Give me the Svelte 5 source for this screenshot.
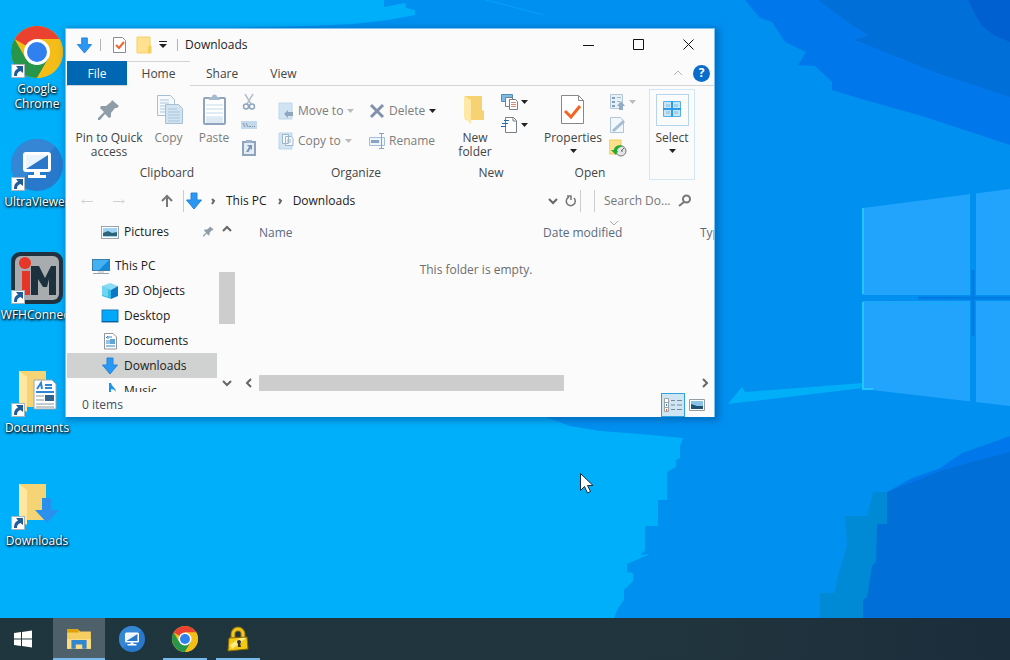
<script lang="ts">
  type IconName = string;

  const shortcuts: { label: string; icon: IconName }[] = [
    { label: "Google Chrome", icon: "chrome" },
    { label: "UltraViewer", icon: "ultraviewer" },
    { label: "WFHConnect", icon: "wfh" },
    { label: "Documents", icon: "folder-doc" },
    { label: "Downloads", icon: "folder-down" },
  ];

  const tabs = ["File", "Home", "Share", "View"];

  const places: { label: string; icon: IconName }[] = [
    { label: "3D Objects", icon: "cube" },
    { label: "Desktop", icon: "desktop" },
    { label: "Documents", icon: "document" },
    { label: "Downloads", icon: "down" },
    { label: "Music", icon: "music" },
  ];

  const tasks: { label: string; icon: IconName; open: boolean }[] = [
    { label: "File Explorer", icon: "explorer", open: true },
    { label: "UltraViewer", icon: "ultraviewer", open: false },
    { label: "Google Chrome", icon: "chrome", open: true },
    { label: "Lock", icon: "lock", open: true },
  ];

  let activeTab = $state("Home");
  let activePlace = $state("Downloads");
  let activeTask = $state("File Explorer");
  let search = $state("");
</script>

{#snippet glyph(name: IconName)}
  {#if name === "chrome"}
    <svg viewBox="0 0 52 52" aria-hidden="true">
      <circle cx="26" cy="26" r="26" fill="#f4bd17" />
      <path d="M26 26 3.5 13A26 26 0 0 1 48.500 13H26Z" fill="#ea4130" />
      <path d="M3.500 13A26 26 0 0 0 26 52L37.500 32.500 26 26 14.700 32.500Z" fill="#27964a" />
      <path d="M48.500 13H26V26L37.300 32.500 26 52A26 26 0 0 0 48.500 13Z" fill="#f4bd17" />
      <circle cx="26" cy="26" r="13" fill="#fff" />
      <circle cx="26" cy="26" r="10" fill="#3080f0" />
    </svg>
  {:else if name === "ultraviewer"}
    <svg viewBox="0 0 52 52" aria-hidden="true">
      <circle cx="26" cy="26" r="26" fill="#2878cc" />
      <path d="M7.600 44.400A26 26 0 0 1 44.400 7.600Z" fill="#3a8bd8" opacity=".7" />
      <rect x="12" y="13" width="28" height="20" rx="3" fill="#fff" />
      <path d="M15 16H37L15 30Z" fill="#eaf4fd" />
      <path d="M37 16V30H15Z" fill="#2b78c8" />
      <path d="M23 33h6v3h6v3H17v-3h6Z" fill="#fff" />
    </svg>
  {:else if name === "wfh"}
    <svg viewBox="0 0 52 52" aria-hidden="true">
      <rect width="52" height="52" rx="9" fill="#20323f" />
      <rect x="4" y="4" width="44" height="44" rx="6" fill="#a9acaf" />
      <path d="M20 43V14h8l6 12 6-12h5v29h-7V27l-2 8h-4l-5-8v16Z" fill="#1d303d" />
      <path d="M11 19h8v24h-8Z" fill="#e83529" />
      <circle cx="14" cy="11" r="6" fill="#e83529" />
    </svg>
  {:else if name === "folder-doc" || name === "folder-down"}
    <svg viewBox="0 0 52 52" aria-hidden="true">
      <path d="M8 6h27v36H17L8 39Z" fill="#f5d476" />
      <path d="M8 6l8 6v35l-8-5Z" fill="#ffe7a0" />
      {#if name === "folder-doc"}
        <path d="M23 15h18l4 4v25H23Z" fill="#fff" stroke="#9aa4ac" />
        <path d="M26 24l4-6 1 6M34 20h7M34 23h7M25 27h18" fill="none" stroke="#2f86d6" stroke-width="2" />
        <path d="M25 31h8M25 35h8M25 39h18M25 42h18" stroke="#8a949c" />
        <path d="M34 30h9v6h-9Z" fill="#31638c" />
      {:else}
        <path d="M31 20h9v12h8L36 45 24 32h7Z" fill="#2a90ee" />
      {/if}
    </svg>
  {:else if name === "down"}
    <svg viewBox="-1 0 18 18" aria-hidden="true">
      <path d="M5 1h6v7h4.500L8 17 .5 8H5Z" fill="#2a97f5" stroke="#2684d8" />
    </svg>
  {:else if name === "cube"}
    <svg viewBox="0 0 18 18" aria-hidden="true">
      <path d="M9 1l8 3-7 4-9-4Z" fill="#8adcf5" />
      <path d="M1 4l9 4v9l-9-3Z" fill="#36bce6" />
      <path d="M17 4l-7 4v9l7-3Z" fill="#0a78c2" />
      <path d="M1 4l6 2v9l-6-2Z" fill="#70d4f0" />
    </svg>
  {:else if name === "desktop"}
    <svg viewBox="0 0 18 18" aria-hidden="true">
      <rect x="1" y="3" width="16" height="12" fill="#00a8fa" stroke="#1676b8" />
      <path d="M1 14.500h16" stroke="#145f98" />
    </svg>
  {:else if name === "document"}
    <svg viewBox="0 0 18 18" aria-hidden="true">
      <path d="M3.500 1.500H12l3.500 3.500v12h-12Z" fill="#fff" stroke="#8f979d" />
      <path d="M5 6l2-2v3M8 5h3M5 9h9M5 11h4M5 14h9" fill="none" stroke="#2e86c9" />
      <path d="M9 7h5v5H9Z" fill="#5ea6d8" />
    </svg>
  {:else if name === "music"}
    <svg viewBox="0 0 18 18" aria-hidden="true">
      <path d="M8 1h2c1 4 5 5 5 9-1-2-3-3-5-3v8c-3 3-7 1-5-1 1-1 2-1 3-1Z" fill="#1996ec" />
    </svg>
  {:else if name === "pictures"}
    <svg viewBox="0 0 18 18" aria-hidden="true">
      <rect x=".5" y="3.500" width="17" height="12" fill="#fff" stroke="#9aa2a8" />
      <path d="M2 5h14v9H2Z" fill="#9fd3f3" />
      <path d="M2 10l5-2 4 2 5-1v4H2Z" fill="#2c6379" />
    </svg>
  {:else if name === "pc"}
    <svg viewBox="0 0 18 18" aria-hidden="true">
      <rect x=".5" y="2.500" width="17" height="11" fill="#43b1f2" stroke="#3e7ca8" />
      <path d="M17 3v10H7Z" fill="#1689d8" />
      <path d="M1 16.500h16" stroke="#98a2aa" />
      <path d="M6 14h6v2H6Z" fill="#d4dbe0" />
    </svg>
  {:else if name === "pin"}
    <svg viewBox="0 0 22 22" aria-hidden="true">
      <path d="M14 1l7 6-2 2h-2l-4 5v4l-2 1-4-4-5 6H0v-2l6-6-4-4 1-2h5l5-4V3Z" fill="#8e9da8" />
    </svg>
  {:else if name === "explorer"}
    <svg viewBox="0 0 24 24" aria-hidden="true">
      <path d="M1 3h10l2 2h10v16H1Z" fill="#f7ce62" />
      <path d="M1 3h10l1 3H1Z" fill="#dfa005" />
      <path d="M1 12h22v9H1Z" fill="#ffdc82" />
      <path d="M5 13h14v8h-4v-4H9v4H5Z" fill="#3186d0" />
    </svg>
  {:else if name === "lock"}
    <svg viewBox="-1 0 26 27" aria-hidden="true">
      <path d="M7 13V8a5 5 0 0 1 10 0v5" fill="none" stroke="#8a6d10" stroke-width="5" />
      <path d="M7 13V8a5 5 0 0 1 10 0v5" fill="none" stroke="#f2c71d" stroke-width="3" />
      <path d="M3 12l18-1 1 12-20 2Z" fill="#f5c913" stroke="#8b6b06" />
      <path d="M4 19l10-7h6L6 23Z" fill="#ffeb83" />
      <circle cx="13" cy="16" r="2" fill="#333" />
      <path d="M12 17h2l1 4h-3Z" fill="#333" />
    </svg>
  {/if}
{/snippet}

{#snippet chevron(d: string)}
  <svg class="chevron" viewBox="0 0 10 10" aria-hidden="true"><path {d} /></svg>
{/snippet}

{#snippet caret()}
  <svg class="caret" viewBox="0 0 7 4" aria-hidden="true"><path d="M0 0h7L3.500 4Z" /></svg>
{/snippet}

<div class="screen">
  <main class="desktop">
    <svg class="wallpaper" viewBox="0 0 1010 618" preserveAspectRatio="xMinYMin slice" aria-hidden="true">
      <rect width="1010" height="618" fill="#0090f0" />
      <path d="M0 0H384V7L405 3 406 8 415 10V15L388 20 353 24 310 26 225 28 147 31 66 35V415H540L570 426 600 431 640 434 683 438 680 446V458L676 460V467L667 472V500H658V526H645V551L640 555 650 554 627 564V572L633 573V581L624 590V600L618 608 614 618H0Z" fill="#00affa" />
      <path d="M486 0l58 15" stroke="#00a4f6" fill="none" />
      <path d="M745 0L760 18 772 22 785 42 806 52 798 65 815 66 832 82V90L865 100 925 117 1010 145V0Z" fill="#0078ec" />
      <path d="M818 0L850 24 868 35 855 40 900 58 940 74 1010 97V0Z" fill="#0070d8" />
      <path d="M968 0L976 16 982 26 995 36 1010 42V0Z" fill="#0060d0" />
      <path d="M887 492H873L867 516H845L847 546 839 572 834 593H820V618H870L887 524Z" fill="#008ad6" />
      <path d="M1010 436L988 444 962 453 940 468 910 479 887 492 930 485 1010 460Z" fill="#0078ec" />
      <path d="M1010 452L975 461 940 471 887 492V524H877L876 562 872 566 867 597 863 600V618H1010Z" fill="#0070d8" />
      <path d="M728 404l14-17 3 5 118-9v5l-75 9Z" fill="#00aff8" />
      <path d="M863 208L1010 189V406L863 389Z" fill="#22a4fd" />
      <path d="M863 208v86M863 302v87h10" stroke="#20c8fa" stroke-width="2" fill="none" />
      <path d="M973 190v216" stroke="#0090f0" stroke-width="6" />
      <path d="M863 298h147" stroke="#0090f0" stroke-width="6" />
      <path d="M918 298h92M973 270v66" stroke="#007be4" stroke-width="3" />
      <path d="M969 194v100M969 303v98M864 303l104 1" stroke="#15acf4" />
    </svg>

    <ul class="shortcuts">
      {#each shortcuts as item}
        <li>
          <a href="#{item.icon}">
            <span class="shortcut-icon">
              {@render glyph(item.icon)}
              <svg class="overlay-arrow" viewBox="0 0 14 14" aria-hidden="true">
                <rect x=".5" y=".5" width="13" height="13" fill="#fff" stroke="#a9b4bc" />
                <path d="M5 2h7v7L9.500 7C7 8 6 9 6 12H3C3 8 4 6 7 4.500Z" fill="#1f5c98" />
              </svg>
            </span>
            <span class="shortcut-label">{item.label}</span>
          </a>
        </li>
      {/each}
    </ul>

    <section class="window" aria-label="Downloads">
      <header class="titlebar">
        <span class="title-icon">{@render glyph("down")}</span>
        <span class="bar"></span>
        <button class="quick" aria-label="Properties">
          <svg width="16" height="18" viewBox="0 0 16 18" aria-hidden="true">
            <path d="M1.500 1.500h9l3 3v12h-12Z" fill="#fff" stroke="#878d92" />
            <path d="M4 9l3 3 5-6" fill="none" stroke="#ee6330" stroke-width="2" />
          </svg>
        </button>
        <button class="quick" aria-label="New folder">
          <svg width="16" height="18" viewBox="0 0 16 18" aria-hidden="true">
            <path d="M1 1h13v8l1 1v7H1Z" fill="#ffe190" stroke="#f6d163" />
            <path d="M12 10h3v7h-3Z" fill="#f6ce5c" />
          </svg>
        </button>
        <button class="quick customize" aria-label="Customize Quick Access Toolbar">
          <svg width="8" height="8" viewBox="0 0 8 8" aria-hidden="true"><path d="M0 0h8v1H0ZM0 3h8L4 7Z" fill="#222" /></svg>
        </button>
        <span class="bar"></span>
        <h1>Downloads</h1>
        <div class="window-buttons">
          <button aria-label="Minimize">
            <svg width="12" height="12" viewBox="0 0 12 12" aria-hidden="true"><path d="M0 6.500h11" /></svg>
          </button>
          <button aria-label="Maximize">
            <svg width="12" height="12" viewBox="0 0 12 12" aria-hidden="true"><path d="M.5.5h10v10H.5Z" /></svg>
          </button>
          <button aria-label="Close">
            <svg width="12" height="12" viewBox="0 0 12 12" aria-hidden="true"><path d="M.5.5l10 10M10.500.5l-10 10" /></svg>
          </button>
        </div>
      </header>

      <nav class="tabs" aria-label="Ribbon tabs">
        {#each tabs as tab}
          <button
            class="tab"
            class:file={tab === "File"}
            class:active={tab === activeTab}
            onclick={() => (activeTab = tab)}
          >
            {tab}
          </button>
        {/each}
        <div class="tabs-end">
          <button class="collapse" aria-label="Minimize the Ribbon">{@render chevron("M1 7l4-4 4 4")}</button>
          <button class="help" aria-label="Help">?</button>
        </div>
      </nav>

      <div class="ribbon">
        <div class="group clipboard-group">
          <div class="group-body">
            <button class="large pin-button">
              <span class="large-icon pin-icon">{@render glyph("pin")}</span>
              Pin to Quick access
            </button>
            <button class="large copy-button" disabled>
              <svg class="large-icon" viewBox="0 0 32 32" aria-hidden="true">
                <g fill="#f6fafd" stroke="#a9bfd6">
                  <path d="M4.500 1.500h13l4 4v16h-17Z" />
                  <path d="M12.500 10.500h13l4 4v15h-17Z" fill="#d2e3f1" />
                </g>
                <path d="M7 6h9M7 9h9M7 12h5M7 15h5M7 18h5M15 15h9M15 18h12M15 21h12M15 24h12M15 27h12" stroke="#a9c5dd" />
              </svg>
              Copy
            </button>
            <button class="large paste-button" disabled>
              <svg class="large-icon" viewBox="0 0 32 32" aria-hidden="true">
                <rect x="6" y="4" width="21" height="26" rx="1" fill="#fff" stroke="#8fa3bd" stroke-width="2" />
                <path d="M11 6V3h3a2.500 2.500 0 0 1 5 0h3v3Z" fill="#a7b9cd" />
                <path d="M8 11h17M8 15h17M8 19h17M8 23h17" stroke="#c2d9ea" />
                <path d="M8 24h17v5H8Z" fill="#dce9f4" />
              </svg>
              Paste
            </button>
            <div class="small-icons">
              <button aria-label="Cut" disabled>
                <svg viewBox="0 0 18 18" aria-hidden="true">
                  <path d="M5 1l6 10M13 1L7 11" stroke="#b4bfca" stroke-width="1.500" fill="none" />
                  <g fill="none" stroke="#8fa5c0" stroke-width="1.500"><circle cx="6" cy="13.500" r="2.500" /><circle cx="12" cy="13.500" r="2.500" /></g>
                </svg>
              </button>
              <button aria-label="Copy path" disabled>
                <svg viewBox="0 0 18 18" aria-hidden="true">
                  <path d="M1 5h16v8H1Z" fill="#c5d9ec" />
                  <path d="M3 7l2 4M6 7l2 4M9 10.500h2M12 10.500h1M14 10.500h1" stroke="#7f95ad" />
                </svg>
              </button>
              <button aria-label="Paste shortcut" disabled>
                <svg viewBox="0 0 18 18" aria-hidden="true">
                  <rect x="3" y="3" width="12" height="13" fill="#e2edf6" stroke="#8fa3bd" stroke-width="2" />
                  <path d="M6 1h6v3H6Z" fill="#a0b2c8" />
                  <path d="M7 6h5v5l-1.500-1.500-2 3.500H6l3-5Z" fill="#7e96b1" />
                </svg>
              </button>
            </div>
          </div>
          <div class="group-label">Clipboard</div>
        </div>

        <div class="group organize-group">
          <div class="group-body rows">
            <button class="row-button" disabled>
              <svg viewBox="0 0 16 18" aria-hidden="true">
                <path d="M1 1h13v16H1Z" fill="#d0e4f3" stroke="#bed6ea" />
                <path d="M6 12l4-4v2h5v4h-5v2Z" fill="#91a7bf" />
              </svg>
              Move to {@render caret()}
            </button>
            <button class="row-button delete-button" disabled>
              <svg viewBox="0 0 16 18" aria-hidden="true"><path d="M2 3l12 12M14 3L2 15" stroke="#8290ae" stroke-width="3" /></svg>
              Delete {@render caret()}
            </button>
            <button class="row-button" disabled>
              <svg viewBox="0 0 16 18" aria-hidden="true">
                <path d="M1 1h13v16H1Z" fill="#d0e4f3" stroke="#bed6ea" />
                <path d="M4.500 2.500h6v9h-6ZM7.500 4.500H13l2 2v7H7.500Z" fill="#f4f9fc" stroke="#9db5cd" />
                <path d="M9 8h4M9 10h4" stroke="#9db5cd" />
              </svg>
              Copy to {@render caret()}
            </button>
            <button class="row-button" disabled>
              <svg viewBox="0 0 16 18" aria-hidden="true">
                <path d="M.5 5.500h15v8H.5Z" fill="#edf4fa" stroke="#a5bfd8" />
                <path d="M2 8h8v3H2Z" fill="#86a4c7" />
                <path d="M10 1.500h5M10 16.500h5M12.500 2v14" stroke="#89a3bf" />
              </svg>
              Rename
            </button>
          </div>
          <div class="group-label">Organize</div>
        </div>

        <div class="group new-group">
          <div class="group-body">
            <button class="large new-button">
              <svg class="large-icon" viewBox="0 0 32 32" aria-hidden="true">
                <path d="M6 2h17v14l2 1v9H6Z" fill="#f6d273" />
                <path d="M5 2l7 4v24l-7-6Z" fill="#ffe8a6" />
              </svg>
              New folder
            </button>
            <div class="small-icons">
              <button aria-label="New item">
                <svg viewBox="0 0 18 18" aria-hidden="true">
                  <path d="M.5 1.500h11v7H.5Z" fill="#7bbbe6" stroke="#558eb4" />
                  <path d="M4.500 4.500h7v9h-7Z" fill="#fff" stroke="#777f86" />
                  <path d="M8.500 6.500h6l2 2v8h-8Z" fill="#fff" stroke="#777f86" />
                  <path d="M10 9.500h5M10 11.500h5M10 13.500h5" stroke="#d68a75" />
                </svg>
                {@render caret()}
              </button>
              <button aria-label="Easy access">
                <svg viewBox="0 0 18 18" aria-hidden="true">
                  <path d="M4.500 1.500h8l3 3v12h-11Z" fill="#fff" stroke="#777f86" />
                  <path d="M12 2v3h3" fill="none" stroke="#777f86" />
                  <path d="M3 4.500h5M1 7.500h6M0 10.500h5" stroke="#246aac" />
                </svg>
                {@render caret()}
              </button>
            </div>
          </div>
          <div class="group-label">New</div>
        </div>

        <div class="group open-group">
          <div class="group-body">
            <button class="large properties-button">
              <svg class="large-icon" viewBox="0 0 32 32" aria-hidden="true">
                <path d="M4.500 1.500h17l5 5v23h-22Z" fill="#fff" stroke="#84898d" />
                <path d="M21.500 1.500v5h5" fill="none" stroke="#84898d" />
                <path d="M8 17l6 6 9-11" fill="none" stroke="#f26522" stroke-width="3" />
              </svg>
              Properties
              {@render caret()}
            </button>
            <div class="small-icons">
              <button aria-label="Open" disabled>
                <svg viewBox="0 0 18 18" aria-hidden="true">
                  <path d="M1.500 1.500h12v14h-12Z" fill="#e8f0f7" stroke="#b2c6da" />
                  <path d="M3 4h3v2H3ZM3 8h3v2H3ZM3 12h3v2H3Z" fill="#7f9dbf" />
                  <path d="M8 4.500h4M8 8.500h3" stroke="#a3b7cc" />
                  <path d="M12 8l4 5h-2v4h-4v-4H8Z" fill="#96acc5" />
                </svg>
                {@render caret()}
              </button>
              <button aria-label="Edit" disabled>
                <svg viewBox="0 0 18 18" aria-hidden="true">
                  <path d="M1.500 1.500h10l3 3v12h-13Z" fill="#f2f7fb" stroke="#aec4da" />
                  <path d="M15 5L4 15" stroke="#a6bcd2" stroke-width="3" />
                </svg>
              </button>
              <button aria-label="History">
                <svg viewBox="0 0 18 18" aria-hidden="true">
                  <path d="M0 1h12v14H0Z" fill="#ffe08a" stroke="#f1cb5c" />
                  <circle cx="12" cy="12" r="5" fill="#e2e4e5" stroke="#767b7e" />
                  <path d="M14 7C9 5 5 8 5 11H2l5 5 2-4H8c0-2 2-4 6-5Z" fill="#25aa36" />
                  <path d="M12 12l3-3M12 12h2" stroke="#676c6e" />
                </svg>
              </button>
            </div>
          </div>
          <div class="group-label">Open</div>
        </div>

        <button class="select-group">
          <span class="select-tile">
            <svg width="20" height="20" viewBox="0 0 20 20" aria-hidden="true">
              <path d="M1.500 1.500h17v15h-17Z" fill="#c5e5f8" stroke="#55b0ee" />
              <path d="M4 4h4v3H4ZM12 4h4v3h-4ZM4 11h4v3H4ZM12 11h4v3h-4Z" fill="#a3cfe9" />
              <path d="M10 1v16M1 9h18" stroke="#2c9ce8" stroke-width="2" />
            </svg>
          </span>
          Select
          {@render caret()}
        </button>
      </div>

      <div class="address">
        <button class="arrow" aria-label="Back" disabled>
          <svg viewBox="0 0 12 14" aria-hidden="true"><path d="M12 7.500H1M3 5.500l-2 2 2 2" /></svg>
        </button>
        <button class="arrow" aria-label="Forward" disabled>
          <svg viewBox="0 0 12 14" aria-hidden="true"><path d="M0 7.500h11M9 5.500l2 2-2 2" /></svg>
        </button>
        <button class="arrow up" aria-label="Up">
          <svg viewBox="0 0 12 14" aria-hidden="true"><path d="M6 13V2M1 7l5-5 5 5" /></svg>
        </button>
        <div class="path">
          <span class="path-icon">{@render glyph("down")}</span>
          {@render chevron("M4 3l2 2-2 3")}
          <a href="#this-pc">This PC</a>
          {@render chevron("M4 3l2 2-2 3")}
          <a href="#downloads">Downloads</a>
          <button class="history" aria-label="Previous locations">{@render chevron("M1 3l4 4 4-4")}</button>
          <button class="refresh" aria-label="Refresh">
            <svg width="12" height="14" viewBox="0 0 12 14" aria-hidden="true">
              <path d="M9 4a4.500 4.500 0 1 1-5-1M2 2h4v4" fill="none" stroke="#777" stroke-width="1.500" />
            </svg>
          </button>
        </div>
        <label class="search">
          <input type="text" placeholder="Search Do..." aria-label="Search Downloads" bind:value={search} />
          <svg width="14" height="14" viewBox="0 0 14 14" aria-hidden="true">
            <circle cx="8.500" cy="5" r="3.500" fill="none" stroke="#777" stroke-width="2" />
            <path d="M6 8l-5 4" stroke="#777" stroke-width="2" />
          </svg>
        </label>
      </div>

      <div class="content">
        <aside class="sidebar">
          <ul>
            <li class="quick-item">
              <a class="place child" href="#pictures">
                <span class="place-icon">{@render glyph("pictures")}</span>Pictures
                <span class="pinned">{@render glyph("pin")}</span>
              </a>
            </li>
            <li>
              <a class="place" href="#this-pc"><span class="place-icon">{@render glyph("pc")}</span>This PC</a>
            </li>
            {#each places as place}
              <li>
                <a
                  class="place child"
                  class:active={place.label === activePlace}
                  href="#{place.icon}"
                  onclick={() => (activePlace = place.label)}
                >
                  <span class="place-icon">{@render glyph(place.icon)}</span>{place.label}
                </a>
              </li>
            {/each}
          </ul>
          <div class="vscroll">
            {@render chevron("M1 7l4-4 4 4")}
            <span class="vthumb"></span>
            {@render chevron("M1 3l4 4 4-4")}
          </div>
        </aside>
        <div class="files">
          <table>
            <thead>
              <tr>
                <th class="name">Name</th>
                <th class="date">
                  <span class="sort">{@render chevron("M1 3l4 4 4-4")}</span>
                  Date modified
                </th>
                <th class="type">Type</th>
              </tr>
            </thead>
          </table>
          <p class="empty">This folder is empty.</p>
          <div class="hscroll">
            {@render chevron("M7 1L3 5l4 4")}
            <span class="htrack"><span class="hthumb"></span></span>
            {@render chevron("M3 1l4 4-4 4")}
          </div>
        </div>
      </div>

      <footer class="status">
        <span>0 items</span>
        <div class="view-buttons">
          <button class="active" aria-label="Details view">
            <svg width="18" height="16" viewBox="0 0 18 16" aria-hidden="true">
              <path d="M.5 1.500h4v13h-4ZM0 5.500h5M0 10.500h5" fill="#fff" stroke="#9ba3a9" />
              <path d="M2 8h1" stroke="#3b8ad0" stroke-width="2" /><path d="M2 13h1" stroke="#e05b3c" stroke-width="2" />
              <path d="M7 3.500h4M13 3.500h5M7 8h4M13 8h5M7 12.500h4M13 12.500h5" stroke="#788a99" />
            </svg>
          </button>
          <button aria-label="Large icons view">
            <svg width="16" height="12" viewBox="0 0 16 12" aria-hidden="true">
              <path d="M.5.5h15v11H.5Z" fill="#fff" stroke="#969da2" />
              <path d="M2 2h12v8H2Z" fill="#8bc2ea" /><path d="M2 5l6 2h6v3H2Z" fill="#205274" />
            </svg>
          </button>
        </div>
      </footer>
    </section>

    <svg class="cursor" viewBox="0 0 14 21" aria-hidden="true">
      <path d="M.5.5v17l4-4 3 6.500 3-1.500-3-6h5.500Z" fill="#fff" stroke="#1b2c3a" />
    </svg>
  </main>

  <footer class="taskbar">
    <button class="start" aria-label="Start">
      <svg width="18" height="18" viewBox="0 0 18 18" aria-hidden="true">
        <path d="M0 3l7-1v6.500H0ZM8 2l10-1.500v8H8ZM0 9.500h7V16l-7-1ZM8 9.500h10v8L8 16Z" fill="#fff" />
      </svg>
    </button>
    {#each tasks as task}
      <button
        class="task"
        class:open={task.open}
        class:active={task.label === activeTask}
        aria-label={task.label}
        onclick={() => (activeTask = task.label)}
      >
        <span class="task-icon">{@render glyph(task.icon)}</span>
      </button>
    {/each}
  </footer>
</div>

<style>
  :global(body) {
    margin: 0;
  }

  .screen {
    display: flex;
    flex-direction: column;
    height: 100vh;
    overflow: hidden;
    font-family: "Open Sans", "Noto Sans", sans-serif;
    font-size: 12px;
    line-height: 14px;
    color: #1c1c1c;
  }

  .screen * {
    box-sizing: border-box;
  }

  button {
    display: flex;
    align-items: center;
    justify-content: center;
    padding: 0;
    border: 0;
    background: none;
    font: inherit;
    color: inherit;
  }

  a {
    color: inherit;
    text-decoration: none;
  }

  ul {
    margin: 0;
    padding: 0;
    list-style: none;
  }

  svg {
    display: block;
    flex-shrink: 0;
  }

  .desktop {
    position: relative;
    flex: 1;
    min-height: 0;
    overflow: hidden;
  }

  .wallpaper {
    position: absolute;
    inset: 0;
    width: 100%;
    height: 100%;
  }

  .shortcuts {
    position: relative;
    width: 74px;
    padding-top: 26px;
  }

  .shortcuts a {
    display: flex;
    flex-direction: column;
    align-items: center;
    height: 113px;
    gap: 3px;
  }

  .shortcut-icon {
    position: relative;
    width: 52px;
    height: 52px;
  }

  .overlay-arrow {
    position: absolute;
    left: 0;
    bottom: 0;
    width: 14px;
    height: 14px;
  }

  .shortcut-label {
    max-width: 74px;
    line-height: 15px;
    text-align: center;
    color: #fff;
    text-shadow: 1px 1px 2px #000, 0 1px 3px #000;
  }

  .window {
    position: absolute;
    top: 28px;
    left: 65px;
    right: 295px;
    border: 1px solid #7cc0ee;
    border-bottom: 0;
    background: #fbfbfb;
    box-shadow: 2px 2px 6px 2px rgba(0, 80, 150, 0.5);
  }

  .titlebar {
    display: flex;
    align-items: center;
    height: 32px;
    padding-left: 10px;
  }

  .title-icon {
    width: 17px;
  }

  .bar {
    width: 1px;
    height: 12px;
    margin: 0 7px;
    background: #b4b4b4;
  }

  .quick {
    width: 24px;
    height: 24px;
  }

  .quick.customize {
    width: 14px;
  }

  h1 {
    margin: 0;
    font-size: 12px;
    font-weight: 400;
  }

  .window-buttons {
    display: flex;
    margin-left: auto;
  }

  .window-buttons button {
    width: 50px;
    height: 32px;
  }

  .window-buttons path {
    fill: none;
    stroke: #111;
  }

  .tabs {
    display: flex;
    height: 25px;
    border-bottom: 1px solid #d3d3d3;
    padding-left: 1px;
  }

  .tab {
    height: 24px;
    padding: 1px 16px 0;
    color: #444;
  }

  .tab.file {
    width: 60px;
    background: #0067b3;
    color: #fff;
  }

  .tab.active {
    width: 63px;
    height: 25px;
    padding: 0 16px;
    border-top: 1px solid #d3d3d3;
    background: #fbfbfb;
  }

  .tabs-end {
    display: flex;
    align-items: center;
    gap: 10px;
    margin-left: auto;
    padding-right: 4px;
  }

  .chevron {
    width: 10px;
    height: 10px;
    fill: none;
    stroke: #666;
    stroke-width: 2px;
  }

  .collapse .chevron {
    stroke: #b5b5b5;
    stroke-width: 1px;
  }

  .help {
    width: 17px;
    height: 17px;
    border-radius: 50%;
    background: #0a6ccb;
    color: #fff;
    font-weight: 700;
  }

  .ribbon {
    display: flex;
    height: 97px;
    padding: 3px 4px 0 5px;
  }

  .group {
    display: flex;
    flex-direction: column;
    color: #444;
  }

  .group-body {
    display: flex;
    height: 77px;
  }

  .group-label {
    text-align: center;
  }

  .clipboard-group {
    width: 192px;
    margin-right: 8px;
  }

  .organize-group {
    width: 170px;
    margin-right: 12px;
  }

  .new-group {
    width: 76px;
    margin-right: 12px;
  }

  .open-group {
    width: 98px;
    margin-right: 10px;
  }

  .large {
    flex-direction: column;
    justify-content: flex-start;
    padding-top: 5px;
    text-align: center;
  }

  .large-icon {
    width: 32px;
    height: 32px;
    margin-bottom: 5px;
  }

  .pin-icon {
    padding: 5px;
  }

  .pin-button {
    width: 76px;
  }

  .copy-button {
    width: 43px;
  }

  .paste-button {
    width: 48px;
  }

  .new-button {
    width: 44px;
  }

  .properties-button {
    width: 64px;
  }

  .large .caret {
    margin-top: 4px;
  }

  .small-icons {
    display: flex;
    flex-direction: column;
    padding: 1px 0 0 4px;
  }

  .clipboard-group .small-icons {
    padding-left: 2px;
  }

  .small-icons button {
    height: 23px;
    gap: 2px;
    justify-content: flex-start;
  }

  .small-icons svg:not(.caret) {
    width: 18px;
    height: 18px;
  }

  .caret {
    width: 7px;
    height: 4px;
    fill: #222;
  }

  button:disabled {
    color: #7d7d7d;
  }

  button:disabled .caret {
    fill: #bbb;
  }

  button.delete-button:disabled .caret {
    fill: #222;
  }

  .rows {
    display: grid;
    grid-template-columns: 91px 1fr;
    grid-template-rows: 30px 30px;
    padding: 7px 0 0 7px;
  }

  .row-button {
    justify-content: flex-start;
    gap: 4px;
  }

  .row-button svg:not(.caret) {
    width: 16px;
    height: 18px;
  }

  .select-group {
    flex-direction: column;
    justify-content: flex-start;
    width: 46px;
    height: 91px;
    padding-top: 4px;
    border: 1px solid #d3e6f4;
    color: #444;
  }

  .select-tile {
    display: grid;
    place-items: center;
    width: 33px;
    height: 32px;
    margin-bottom: 5px;
    border: 1px solid #b4d5ee;
  }

  .select-group .caret {
    margin-top: 4px;
  }

  .address {
    display: flex;
    align-items: center;
    height: 35px;
    padding-left: 5px;
  }

  .arrow {
    width: 32px;
    height: 28px;
  }

  .arrow svg {
    width: 12px;
    height: 14px;
    fill: none;
    stroke: #777;
    stroke-width: 2px;
  }

  .arrow:disabled svg {
    stroke: #d0d0d0;
    stroke-width: 1px;
  }

  .arrow.up {
    margin-left: 16px;
  }

  .path {
    display: flex;
    flex: 1;
    align-items: center;
    height: 22px;
    border-left: 1px solid #ccc;
    border-right: 1px solid #ccc;
  }

  .path-icon {
    width: 18px;
    margin: 0 5px 0 1px;
  }

  .path a {
    margin: 0 8px;
  }

  .history {
    margin-left: auto;
    width: 18px;
    height: 20px;
  }

  .refresh {
    width: 18px;
    height: 20px;
  }

  .search {
    display: flex;
    align-items: center;
    width: 120px;
    height: 22px;
    margin-left: 13px;
    padding-left: 9px;
    border-left: 1px solid #ccc;
  }

  .search input {
    width: 74px;
    padding: 0;
    border: 0;
    outline: 0;
    background: none;
    font: inherit;
    color: #333;
  }

  .search input::placeholder {
    color: #777;
    opacity: 1;
  }

  .content {
    display: flex;
    height: 174px;
    padding-top: 1px;
  }

  .sidebar {
    display: flex;
    width: 172px;
    padding-left: 1px;
    overflow: hidden;
  }

  .sidebar ul {
    width: 150px;
  }

  .quick-item {
    margin-bottom: 9px;
  }

  .place {
    display: flex;
    align-items: center;
    height: 25px;
    padding-left: 25px;
  }

  .place.child {
    padding-left: 34px;
  }

  .place.active {
    background: #d0d1d1;
  }

  .place-icon {
    width: 18px;
    margin-right: 5px;
  }

  .pinned {
    width: 11px;
    margin: 0 3px 0 auto;
  }

  .vscroll {
    display: flex;
    flex-direction: column;
    align-items: center;
    justify-content: space-between;
    width: 16px;
    margin-left: 2px;
    padding: 5px 0 4px;
  }

  .vthumb {
    width: 16px;
    height: 52px;
    margin-bottom: 16px;
    background: #cdcdcd;
  }

  .files {
    display: flex;
    flex: 1;
    flex-direction: column;
    min-width: 0;
    overflow: hidden;
  }

  table {
    width: 560px;
    table-layout: fixed;
    border-collapse: collapse;
  }

  th {
    position: relative;
    height: 28px;
    padding: 0;
    font-weight: 400;
    text-align: left;
    color: #5a6b80;
  }

  th.name {
    width: 305px;
    padding-left: 21px;
  }

  th.date {
    width: 157px;
  }

  .sort {
    position: absolute;
    top: -1px;
    left: 66px;
  }

  .sort .chevron {
    stroke: #aaa;
    stroke-width: 1px;
  }

  .empty {
    margin: 16px 0 0;
    text-align: center;
    color: #6d6d6d;
  }

  .hscroll {
    display: flex;
    align-items: center;
    gap: 5px;
    margin-top: auto;
    padding: 0 4px 1px 6px;
  }

  .htrack {
    flex: 1;
    height: 16px;
  }

  .hthumb {
    display: block;
    width: 70%;
    height: 16px;
    border-radius: 1px;
    background: #cdcdcd;
  }

  .status {
    display: flex;
    align-items: center;
    justify-content: space-between;
    height: 25px;
    padding: 0 5px 0 16px;
    color: #3f4f63;
  }

  .view-buttons {
    display: flex;
  }

  .view-buttons button {
    width: 24px;
    height: 24px;
  }

  .view-buttons .active {
    border: 1px solid #2fa3dd;
    background: #cfe5f3;
  }

  .cursor {
    position: absolute;
    top: 473px;
    left: 580px;
    width: 14px;
    height: 21px;
  }

  .taskbar {
    display: flex;
    gap: 1px;
    height: 42px;
    background: linear-gradient(90deg, #1f363f, #20343d 70%, #1b2d3b);
  }

  .start {
    width: 52px;
    padding-right: 6px;
  }

  .task {
    width: 52px;
    background-repeat: no-repeat;
    background-position: center bottom;
  }

  .task.open {
    background-image: linear-gradient(#76b9ed, #76b9ed);
    background-size: 44px 2px;
  }

  .task.active {
    background-color: #4e606a;
    background-size: 100% 2px;
  }

  .task-icon {
    width: 26px;
  }
</style>
